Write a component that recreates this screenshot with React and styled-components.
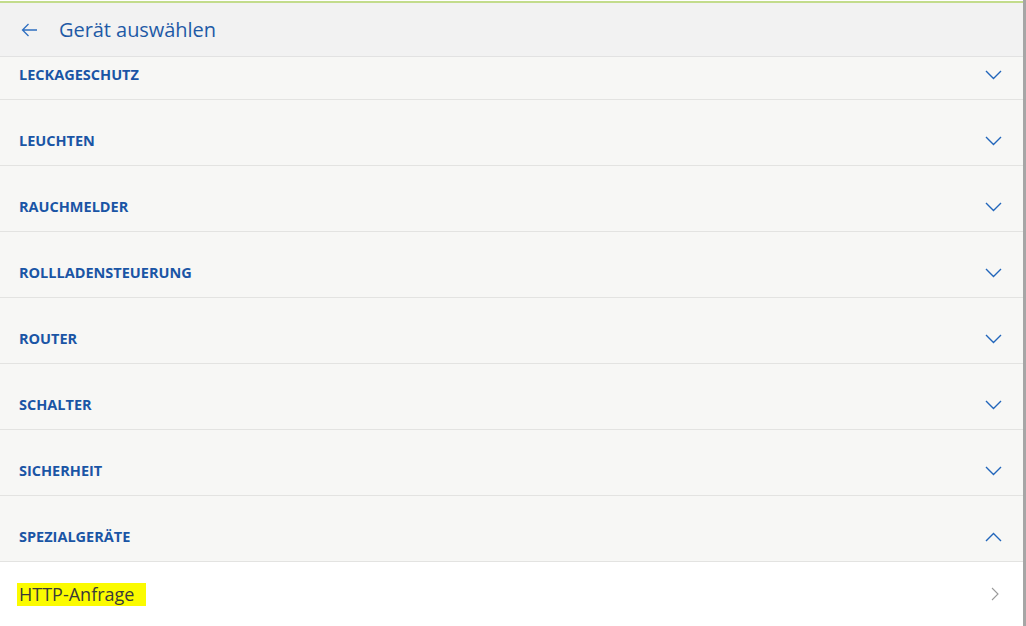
import React, { useEffect, useRef } from 'react'
import styled, { createGlobalStyle } from 'styled-components'

const GlobalStyle = createGlobalStyle`
  html, body {
    margin: 0;
    padding: 0;
    height: 100%;
    overflow: hidden;
    background: #ffffff;
    font-family: "Open Sans", "Noto Sans", "Liberation Sans", sans-serif;
  }
  #root { height: 100%; }
`

const categories = [
  'Leckageschutz',
  'Leuchten',
  'Rauchmelder',
  'Rollladensteuerung',
  'Router',
  'Schalter',
  'Sicherheit',
]

const Chevron = ({ up }) => (
  <svg width="17" height="10" viewBox="0 0 17 10" fill="none">
    <path
      d={up ? 'M1 9L8.5 1.5L16 9' : 'M1 1L8.5 8.5L16 1'}
      stroke="#2266bb"
      strokeWidth="1.4"
    />
  </svg>
)

const App = () => {
  const scrollRef = useRef(null)
  useEffect(() => {
    if (scrollRef.current) scrollRef.current.scrollTop = 23
  }, [])

  return (
    <>
      <GlobalStyle />
      <Page>
        <Main>
          <TopLine />
          <Header>
            <BackButton>
              <svg width="16" height="14" viewBox="0 0 16 14" fill="none">
                <path d="M16 7H1.5M7.5 1L1.5 7L7.5 13" stroke="#2f6fc0" strokeWidth="1.3" />
              </svg>
            </BackButton>
            <Title>Gerät auswählen</Title>
          </Header>
          <Scroller ref={scrollRef}>
            {categories.map((c) => (
              <Section key={c}>
                <SectionTitle>{c}</SectionTitle>
                <Chevron />
              </Section>
            ))}
            <Section>
              <SectionTitle>Spezialgeräte</SectionTitle>
              <Chevron up />
            </Section>
            <Item>
              <Highlight>HTTP-Anfrage</Highlight>
              <svg width="8" height="14" viewBox="0 0 8 14" fill="none">
                <path d="M1 1L7 7L1 13" stroke="#9a9a9a" strokeWidth="1.1" />
              </svg>
            </Item>
            <Spacer />
          </Scroller>
        </Main>
        <ScrollEdge />
      </Page>
    </>
  )
}

const Page = styled.div`
  display: flex;
  height: 100vh;
  width: 100vw;
`

const Main = styled.div`
  flex: 1;
  display: flex;
  flex-direction: column;
  min-width: 0;
`

const ScrollEdge = styled.div`
  width: 3px;
  background: #a6a6a6;
`

const TopLine = styled.div`
  height: 2px;
  margin-top: 1px;
  background: #c3dc8c;
`

const Header = styled.div`
  height: 54px;
  display: flex;
  align-items: center;
  background: #f2f2f2;
  border-bottom: 1px solid #e2e2e2;
  box-sizing: border-box;
  padding-left: 21px;
  gap: 22px;
`

const BackButton = styled.div`
  display: flex;
  align-items: center;
`

const Title = styled.h1`
  margin: 0;
  font-size: 20px;
  font-weight: 400;
  color: #1f5aa6;
  letter-spacing: -0.05px;
`

const Scroller = styled.div`
  flex: 1;
  overflow: hidden;
  background: #f7f7f5;
`

const Section = styled.div`
  height: 66px;
  box-sizing: border-box;
  display: flex;
  align-items: center;
  justify-content: space-between;
  padding: 16px 21px 0 19px;
  border-bottom: 1px solid #e3e3e1;
  background: #f7f7f5;
`

const SectionTitle = styled.span`
  font-size: 14.5px;
  font-weight: 700;
  text-transform: uppercase;
  color: #1a55a5;
`

const Item = styled.div`
  height: 64px;
  display: flex;
  align-items: center;
  justify-content: space-between;
  padding: 0 24px 0 17px;
  background: #ffffff;
`

const Highlight = styled.span`
  background: #fbfb00;
  color: #3a3a3a;
  font-size: 18px;
  padding: 0 12px 0 2px;
  line-height: 23px;
`

const Spacer = styled.div`
  height: 100px;
  background: #ffffff;
`

export default App
